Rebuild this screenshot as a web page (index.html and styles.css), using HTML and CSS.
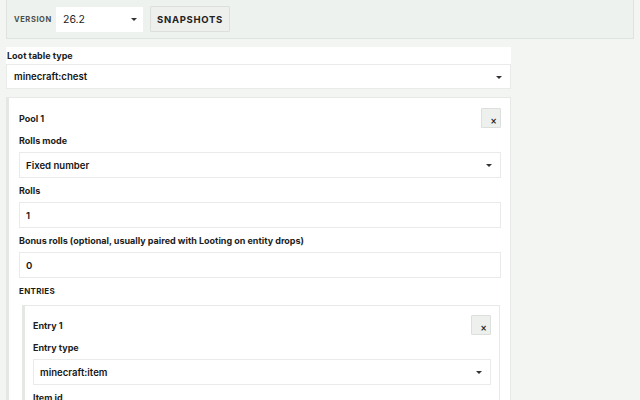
FILE: index.html
```html
<!DOCTYPE html>
<html>
<head>
<meta charset="utf-8">
<link rel="stylesheet" href="styles.css">
</head>
<body>
<div class="topbar">
  <span class="vlabel">VERSION</span>
  <div class="vselect"><span>26.2</span><span class="caret"></span></div>
  <button class="snap">SNAPSHOTS</button>
</div>
<div class="main">
  <div class="toplabel">Loot table type</div>
  <div class="select wide"><span>minecraft:chest</span><span class="caret"></span></div>
  <div class="card pool">
    <div class="head"><span class="title">Pool 1</span><button class="close">×</button></div>
    <div class="field">
      <div class="label">Rolls mode</div>
      <div class="select"><span>Fixed number</span><span class="caret"></span></div>
    </div>
    <div class="field">
      <div class="label">Rolls</div>
      <div class="input">1</div>
    </div>
    <div class="field">
      <div class="label">Bonus rolls (optional, usually paired with Looting on entity drops)</div>
      <div class="input">0</div>
    </div>
    <div class="field">
      <div class="label section">ENTRIES</div>
    </div>
    <div class="card entry">
      <div class="head"><span class="title">Entry 1</span><button class="close">×</button></div>
      <div class="field">
        <div class="label">Entry type</div>
        <div class="select"><span>minecraft:item</span><span class="caret"></span></div>
      </div>
      <div class="field">
        <div class="label">Item id</div>
        <div class="input"></div>
      </div>
    </div>
  </div>
</div>
</body>
</html>
```
FILE: styles.css
```css
* { box-sizing: border-box; }
html, body { margin: 0; padding: 0; }
body {
  background: #f3f5f2;
  font-family: Inter, "Noto Sans", sans-serif;
  color: #1c1c1c;
  height: 400px;
  overflow: hidden;
}
.topbar {
  margin: 0 6px;
  height: 39px;
  background: #eef2ee;
  border: 1px solid #dfe3df;
  border-top: none;
  display: flex;
  align-items: center;
  padding: 0 7px;
}
.vlabel {
  font-size: 7.5px;
  font-weight: 700;
  letter-spacing: 0.6px;
  color: #4a4f4a;
  width: 42px;
}
.vselect {
  width: 87px;
  height: 25px;
  background: #fff;
  display: flex;
  align-items: center;
  justify-content: space-between;
  padding: 0 6px 0 7px;
  font-size: 10.5px;
  color: #222;
}
.snap {
  margin-left: 7px;
  height: 26px;
  width: 80px;
  background: #eef0ee;
  border: 1px solid #dcdfdc;
  border-radius: 1px;
  font-family: Inter, "Noto Sans", sans-serif;
  font-size: 9.5px;
  font-weight: 700;
  letter-spacing: 0.7px;
  color: #222;
  padding: 0;
}
.caret {
  width: 0; height: 0;
  border-left: 3.5px solid transparent;
  border-right: 3.5px solid transparent;
  border-top: 3.5px solid #333;
  margin-top: 1px;
}
.main {
  width: 505px;
  margin: 8px 0 0 6px;
}
.toplabel {
  background: #fff;
  height: 17px;
  line-height: 17px;
  font-size: 9px;
  font-weight: 700;
  padding-left: 1px;
}
.select, .input {
  height: 26px;
  background: #fff;
  border: 1px solid #e8ebe8;
  display: flex;
  align-items: center;
  justify-content: space-between;
  padding: 0 8px 0 6px;
  font-size: 9.6px;
  font-weight: 600;
  color: #161616;
}
.select.wide { padding-left: 7px; height: 25px; }
.card {
  background: #fff;
  border: 1px solid #e6e9e6;
  border-left: 3px solid #e4e7e4;
}
.pool {
  margin-top: 8px;
  padding: 10px 9px 10px 10px;
}
.entry {
  margin: 8px 1px 0 3px;
  padding: 9px 8px 10px 8px;
}
.head {
  display: flex;
  align-items: center;
  justify-content: space-between;
  height: 20px;
}
.title {
  font-size: 9px;
  font-weight: 700;
}
.close {
  width: 20px;
  height: 20px;
  background: #eef0ee;
  border: 1px solid #dcdfdc;
  border-radius: 1px;
  font-family: "DejaVu Sans", sans-serif;
  font-size: 8px;
  font-weight: 700;
  color: #222;
  padding: 7px 0 0 5px;
  line-height: 10px;
}
.field { margin-top: 7px; }
.label {
  font-size: 9px;
  font-weight: 700;
  line-height: 12px;
  margin-bottom: 5px;
}
.label.section {
  font-size: 8px;
  letter-spacing: 0.3px;
  margin-top: 3px;
  margin-bottom: 0;
}
```
